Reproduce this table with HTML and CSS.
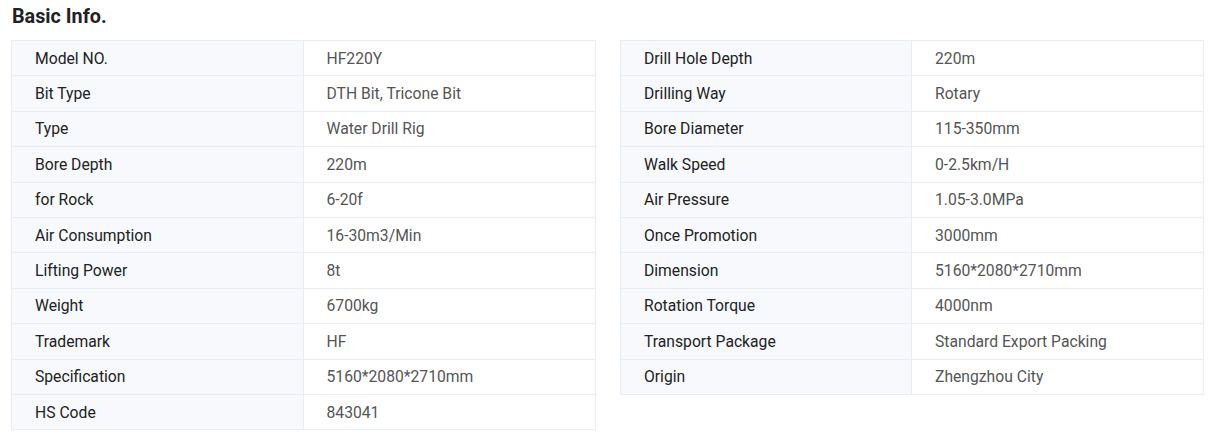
FILE: index.html
```html
<!DOCTYPE html>
<html lang="en">
<head>
<meta charset="utf-8">
<title>Basic Info.</title>
<link rel="stylesheet" href="styles.css">
</head>
<body>
<div class="page">
  <h2 class="title">Basic Info.</h2>
  <div class="tables">
    <div class="table">
      <div class="row"><div class="label">Model NO.</div><div class="value">HF220Y</div></div>
      <div class="row"><div class="label">Bit Type</div><div class="value">DTH Bit, Tricone Bit</div></div>
      <div class="row"><div class="label">Type</div><div class="value">Water Drill Rig</div></div>
      <div class="row"><div class="label">Bore Depth</div><div class="value">220m</div></div>
      <div class="row"><div class="label">for Rock</div><div class="value">6-20f</div></div>
      <div class="row"><div class="label">Air Consumption</div><div class="value">16-30m3/Min</div></div>
      <div class="row"><div class="label">Lifting Power</div><div class="value">8t</div></div>
      <div class="row"><div class="label">Weight</div><div class="value">6700kg</div></div>
      <div class="row"><div class="label">Trademark</div><div class="value">HF</div></div>
      <div class="row"><div class="label">Specification</div><div class="value">5160*2080*2710mm</div></div>
      <div class="row"><div class="label">HS Code</div><div class="value">843041</div></div>
    </div>
    <div class="table">
      <div class="row"><div class="label">Drill Hole Depth</div><div class="value">220m</div></div>
      <div class="row"><div class="label">Drilling Way</div><div class="value">Rotary</div></div>
      <div class="row"><div class="label">Bore Diameter</div><div class="value">115-350mm</div></div>
      <div class="row"><div class="label">Walk Speed</div><div class="value">0-2.5km/H</div></div>
      <div class="row"><div class="label">Air Pressure</div><div class="value">1.05-3.0MPa</div></div>
      <div class="row"><div class="label">Once Promotion</div><div class="value">3000mm</div></div>
      <div class="row"><div class="label">Dimension</div><div class="value">5160*2080*2710mm</div></div>
      <div class="row"><div class="label">Rotation Torque</div><div class="value">4000nm</div></div>
      <div class="row"><div class="label">Transport Package</div><div class="value">Standard Export Packing</div></div>
      <div class="row"><div class="label">Origin</div><div class="value">Zhengzhou City</div></div>
    </div>
  </div>
</div>
</body>
</html>
```

FILE: styles.css
```css
* { box-sizing: border-box; }
html, body { margin: 0; padding: 0; background: #fff; }
body { font-family: Roboto, "Liberation Sans", Arial, sans-serif; }
.page { padding: 4px 0 0 11px; }
.title {
  margin: 0 0 0 1px;
  font-size: 19.8px;
  font-weight: 700;
  color: #222;
  line-height: 26px;
  height: 36px;
}
.tables {
  display: grid;
  grid-template-columns: 585px 584px;
  column-gap: 24px;
  align-items: start;
}
.table {
  border: 1px solid #e8ecf3;
  border-bottom: none;
}
.row {
  display: grid;
  grid-template-columns: 50% 50%;
  height: 35.4px;
  border-bottom: 1px solid #e8ecf3;
  font-size: 15.7px;
}
.label, .value {
  display: flex;
  align-items: center;
  padding-left: 23px;
}
.label {
  background: #f7f9fc;
  color: #222;
  border-right: 1px solid #e8ecf3;
}
.value {
  color: #555;
  background: #fff;
}
```
